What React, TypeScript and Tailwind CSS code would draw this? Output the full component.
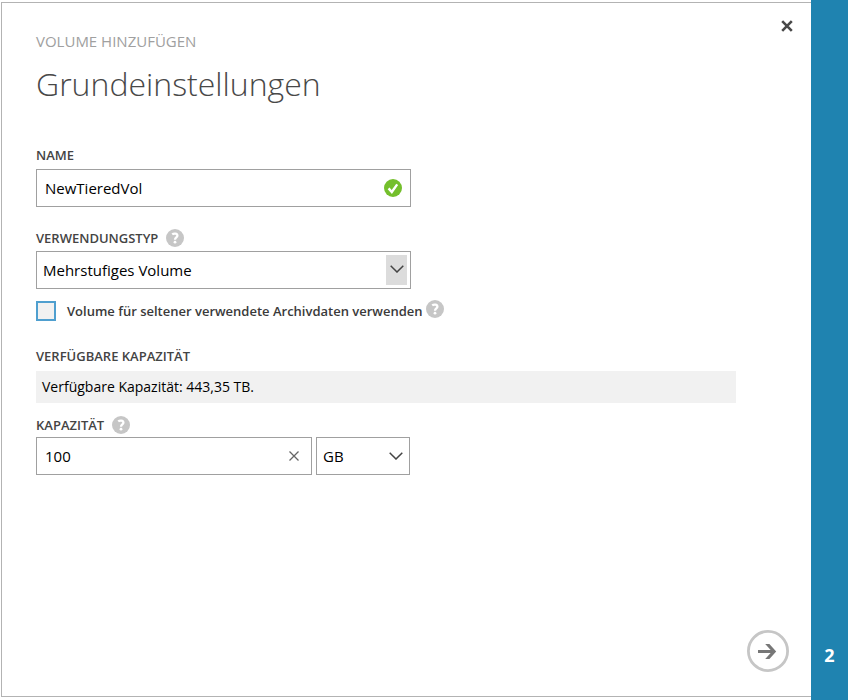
import { useState } from "react";
import type { ReactNode } from "react";

function HelpButton({ label }: { label: string }) {
  return (
    <button type="button" aria-label={label} className="h-[18px] w-[18px] shrink-0">
      <svg viewBox="0 0 18 18" className="block h-full w-full" aria-hidden="true">
        <circle cx="9" cy="9" r="9" fill="#c6c6c6" />
        <path
          d="M6.2 5.4C7.6 4.3 11.4 4.1 11.4 6.7C11.4 8.5 9 8.4 9 10.8"
          fill="none"
          stroke="#fff"
          strokeWidth="2.3"
        />
        <circle cx="9" cy="13.2" r="1.4" fill="#fff" />
      </svg>
    </button>
  );
}

function Chevron() {
  return (
    <svg viewBox="0 0 14 8" className="h-2 w-[14px]" aria-hidden="true">
      <path d="M0.7 0.7L7 7L13.3 0.7" fill="none" stroke="#444" strokeWidth="1.5" />
    </svg>
  );
}

function FieldLabel({ htmlFor, children }: { htmlFor: string; children: ReactNode }) {
  return (
    <label htmlFor={htmlFor} className="text-[13px] leading-5 font-semibold text-[#444]">
      {children}
    </label>
  );
}

export default function App() {
  const [name, setName] = useState("NewTieredVol");
  const [capacity, setCapacity] = useState("100");

  return (
    <div className="flex min-h-screen bg-white font-['Open_Sans','Noto_Sans',sans-serif] text-black">
      <main className="flex flex-1 flex-col pt-0.5 pb-[3px] pl-px">
        <form
          className="flex flex-1 flex-col border-y border-l border-[#b3b3b3] pr-[22px] pb-6 pl-[34px]"
          onSubmit={(e) => e.preventDefault()}
        >
          <header className="flex items-start justify-between pt-[15px]">
            <div className="pt-[13px]">
              <p className="text-[15px] leading-5 text-[#a0a0a0]">VOLUME HINZUFÜGEN</p>
              <h1 className="mt-[9px] text-[32px] leading-[48px] font-light text-[#484848]">
                Grundeinstellungen
              </h1>
            </div>
            <button type="button" aria-label="Schließen" className="-mr-1.5 p-0.5">
              <svg viewBox="0 0 12 12" className="h-3 w-3" aria-hidden="true">
                <path d="M1.2 1.2L10.8 10.8M10.8 1.2L1.2 10.8" stroke="#484848" strokeWidth="2.6" />
              </svg>
            </button>
          </header>

          <div className="mt-[37px] flex max-w-[375px] flex-col">
            <FieldLabel htmlFor="name">NAME</FieldLabel>
            <div className="mt-1 flex h-[38px] items-center border border-[#a0a0a0] pr-2">
              <input
                id="name"
                value={name}
                onChange={(e) => setName(e.target.value)}
                className="min-w-0 flex-1 px-2 text-[15px] leading-5 outline-none"
              />
              <svg viewBox="0 0 18 18" className="h-[18px] w-[18px]" aria-hidden="true">
                <circle cx="9" cy="9" r="9" fill="#74bf2c" />
                <path d="M4.6 9.4L7.8 13L13.2 5.4" fill="none" stroke="#fff" strokeWidth="2.4" />
              </svg>
            </div>
          </div>

          <div className="mt-[21px] flex max-w-[375px] flex-col">
            <div className="flex items-center gap-2">
              <FieldLabel htmlFor="usage">VERWENDUNGSTYP</FieldLabel>
              <HelpButton label="Hilfe zum Verwendungstyp" />
            </div>
            <div className="mt-[3px] grid h-[38px] grid-cols-1 items-center border border-[#a0a0a0]">
              <select
                id="usage"
                className="col-start-1 row-start-1 h-full w-full appearance-none pr-8 pl-1.5 text-[15px] leading-5 outline-none"
              >
                <option>Mehrstufiges Volume</option>
              </select>
              <span className="pointer-events-none col-start-1 row-start-1 mr-[3px] flex h-[30px] w-[21px] items-center justify-center justify-self-end bg-[#dcdcdc] pb-0.5">
                <Chevron />
              </span>
            </div>
          </div>

          <div className="mt-[11px] flex items-center">
            <input
              id="archive"
              type="checkbox"
              className="h-5 w-5 shrink-0 appearance-none border-2 border-[#4f9fcf] bg-[#f1f1f1] checked:bg-[#4f9fcf]"
            />
            <label
              htmlFor="archive"
              className="ml-[11px] text-[13px] leading-[22px] font-semibold text-[#3a3a3a]"
            >
              Volume für seltener verwendete Archivdaten verwenden
            </label>
            <span className="mb-1 ml-[3px] flex">
              <HelpButton label="Hilfe zu Archivdaten" />
            </span>
          </div>

          <div className="mt-6 flex flex-col">
            <FieldLabel htmlFor="available">VERFÜGBARE KAPAZITÄT</FieldLabel>
            <output
              id="available"
              className="mt-[5px] block max-w-[700px] bg-[#f1f1f1] px-1.5 py-1.5 text-sm leading-5"
            >
              Verfügbare Kapazität: 443,35 TB.
            </output>
          </div>

          <div className="mt-3 flex max-w-[374px] flex-col">
            <div className="flex items-center gap-2">
              <FieldLabel htmlFor="capacity">KAPAZITÄT</FieldLabel>
              <HelpButton label="Hilfe zur Kapazität" />
            </div>
            <div className="mt-0.5 flex gap-1">
              <div className="flex h-[38px] flex-1 items-center border border-[#a0a0a0] pr-3">
                <input
                  id="capacity"
                  value={capacity}
                  onChange={(e) => setCapacity(e.target.value)}
                  className="min-w-0 flex-1 px-2 text-[15px] leading-5 outline-none"
                />
                <button type="button" aria-label="Wert löschen" onClick={() => setCapacity("")}>
                  <svg viewBox="0 0 10 10" className="h-2.5 w-2.5" aria-hidden="true">
                    <path d="M0.5 0.5L9.5 9.5M9.5 0.5L0.5 9.5" stroke="#666" strokeWidth="1.3" />
                  </svg>
                </button>
              </div>
              <div className="grid h-[38px] w-[94px] grid-cols-1 items-center border border-[#a0a0a0]">
                <select
                  aria-label="Einheit"
                  className="col-start-1 row-start-1 h-full w-full appearance-none pr-6 pl-1.5 text-[15px] leading-5 outline-none"
                >
                  <option>GB</option>
                  <option>TB</option>
                </select>
                <span className="pointer-events-none col-start-1 row-start-1 mr-1.5 flex justify-self-end">
                  <Chevron />
                </span>
              </div>
            </div>
          </div>

          <div className="mt-auto flex justify-end">
            <button type="submit" aria-label="Weiter" className="h-[42px] w-[42px]">
              <svg viewBox="0 0 42 42" className="h-full w-full" aria-hidden="true">
                <circle cx="21" cy="21" r="19.6" fill="none" stroke="#c6c6c6" strokeWidth="2.8" />
                <path d="M11 21.5H27" stroke="#777" strokeWidth="3" />
                <path d="M18.2 14H22.4L29.2 21.5L22.4 29H18.2L25 21.5Z" fill="#777" />
              </svg>
            </button>
          </div>
        </form>
      </main>
      <aside className="flex w-[37px] shrink-0 items-end justify-center bg-[#1f83b0] pb-8">
        <button type="button" aria-label="Schritt 2" className="text-lg leading-[26px] font-bold text-white">
          2
        </button>
      </aside>
    </div>
  );
}
